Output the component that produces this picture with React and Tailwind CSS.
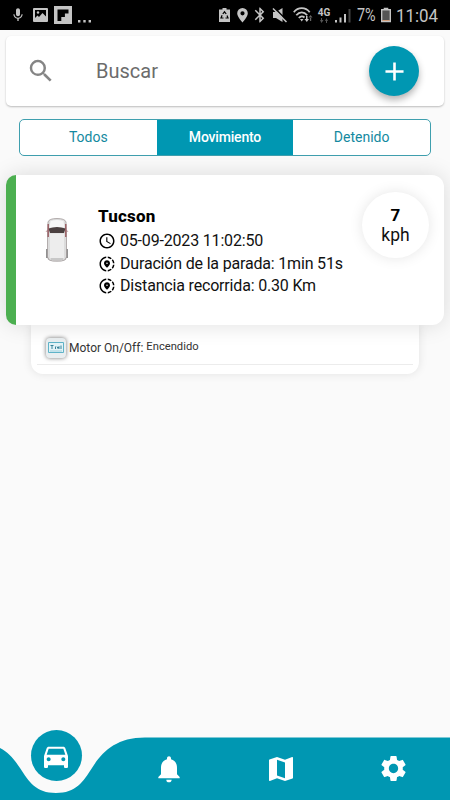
import {
  MdAccessTime,
  MdAdd,
  MdBluetooth,
  MdDirectionsCar,
  MdLocationOn,
  MdMap,
  MdMic,
  MdNotifications,
  MdSearch,
  MdSettings,
  MdShareLocation,
} from 'react-icons/md';

function StatusBar() {
  return (
    <div className="flex h-[30px] items-center justify-between bg-black text-[#c4c4c4]">
      <div className="flex h-full items-center pl-[10px]">
        <MdMic className="h-4 w-4" />
        <svg className="ml-[7px] h-[14px] w-[15px]" viewBox="0 0 15 14">
          <rect width="15" height="14" rx="1" fill="currentColor" />
          <path fill="#000" d="M2 2h11v6.500L9.500 5 6 9 4.500 7.500 2 10z" />
          <circle cx="5" cy="4.500" r="1.200" fill="currentColor" />
        </svg>
        <svg className="ml-[6px] h-[18px] w-[18px]" viewBox="0 0 18 18">
          <path fill="currentColor" d="M0 0h18v18H0z" />
          <path fill="#000" d="M3.500 3.500h11v4h-3.600v3.600H7.300v3.800H3.500z" />
        </svg>
        <svg className="ml-[6px] h-[18px] w-[14px]" viewBox="0 0 14 18">
          <path fill="currentColor" d="M0 14h2.400v2.400H0zM5.300 14h2.400v2.400H5.300zM10.600 14H13v2.400h-2.400z" />
        </svg>
      </div>

      <div className="flex h-full items-center pr-3">
        <svg className="h-4 w-[11px]" viewBox="0 0 11 16">
          <path fill="currentColor" d="M3.500 1h4v1.500H11V15H0V2.500h3.500z" />
          <path fill="none" stroke="#000" strokeWidth="1.200" d="M3.800 7l1.700-2.200L7.200 7M8 8.500l1 2.500H6.500M4.500 11H2l1.100-2.700" />
        </svg>
        <svg className="ml-[7px] h-4 w-[11px]" viewBox="0 0 11 16">
          <path fill="currentColor" fillRule="evenodd" d="M5.500 1A5.300 5.300 0 0 0 .2 6.300C.2 10 5.500 15.500 5.500 15.500S10.800 10 10.800 6.300A5.300 5.300 0 0 0 5.500 1zm0 3.200a2.100 2.100 0 1 1 0 4.200 2.100 2.100 0 0 1 0-4.200z" />
        </svg>
        <MdBluetooth className="ml-[3px] h-[18px] w-[18px]" />
        <svg className="ml-[3px] h-4 w-4" viewBox="0 0 16 16">
          <path fill="currentColor" d="M1 5h3l6.500-4v14L4 11H1z" />
          <path stroke="#000" strokeWidth="1.600" d="M2 .5l13 13" />
          <path stroke="currentColor" strokeWidth="1.500" d="M1 1.500l13.500 13.500" />
        </svg>
        <svg className="ml-[5px] h-4 w-5" viewBox="0 0 20 16">
          <g fill="none" stroke="currentColor" strokeWidth="1.800">
            <path d="M.8 5.200C5-.3 12.500-.3 16.700 5.200" />
            <path d="M3.300 8.200C6.500 4.300 11 4.300 14.200 8.200" />
            <path d="M5.800 11C7.800 8.800 9.700 8.800 11.500 10.500" />
          </g>
          <path fill="currentColor" d="M7 12h3.500L8.700 14.500zM11.500 12h4.500l-2.200 3zM13 9h1.500v4H13z" />
          <path fill="#666" d="M15.500 10.500h4L17.500 8zM16.900 10h1.300v4h-1.300z" />
        </svg>
        <div className="ml-[5px] flex h-[15px] w-3 flex-col items-center">
          <span className="text-[10px] leading-[10px] font-bold">4G</span>
          <svg className="h-[5px] w-2" viewBox="0 0 8 5">
            <path fill="#555" d="M1 0h1v2h1.500L1.500 5 0 2h1zM6 5h1V3h1L6.500 0 5 3h1z" />
          </svg>
        </div>
        <svg className="ml-[5px] h-[15px] w-4" viewBox="0 0 16 15">
          <path fill="currentColor" d="M0 12h2v2.500H0zM4.500 9.500h2v5h-2zM9 6h2v8.500H9z" />
          <path fill="#444" d="M13.500 1h2v13.500h-2z" />
        </svg>
        <div className="ml-[6px] w-[20px] text-lg leading-none">
          <span className="inline-block origin-left scale-x-[0.8]">7%</span>
        </div>
        <svg className="ml-[4px] h-4 w-[10px]" viewBox="0 0 11 16">
          <path fill="currentColor" d="M3 0h5v1.500h3V16H0V1.500h3z" />
          <path fill="#555" d="M1.500 3h8v11h-8z" />
          <path fill="#d9a07a" d="M1.500 13.500h8v1h-8z" />
        </svg>
        <div className="ml-[5px] w-[42px] text-[19px] leading-none">
          <span className="inline-block origin-left scale-x-[0.89]">11:04</span>
        </div>
      </div>
    </div>
  );
}

function SearchBar() {
  return (
    <div className="mx-[6px] mt-[6px] flex h-[70px] items-center rounded-[5px] bg-white pr-[25px] pl-5 shadow-[0_1px_2px_rgba(0,0,0,0.25)]">
      <MdSearch className="h-[30px] w-[30px] text-[#858585]" />
      <span className="ml-10 flex-1 text-[20px] text-[#6c6c6c]">Buscar</span>
      <button className="flex h-[50px] w-[50px] items-center justify-center rounded-full bg-[#0097b2] text-white shadow-[0_4px_7px_rgba(0,0,0,0.3)]">
        <MdAdd className="h-[31px] w-[31px]" />
      </button>
    </div>
  );
}

function Tabs() {
  return (
    <div className="mx-[19px] mt-[13px] grid h-[37px] grid-cols-3 overflow-hidden rounded-[5px] border border-[#3f9fae] bg-white text-[14px] text-[#1489a0]">
      <button>Todos</button>
      <button className="bg-[#0097b2] font-medium tracking-[-0.180px] text-white">Movimiento</button>
      <button>Detenido</button>
    </div>
  );
}

function CarTop() {
  return (
    <svg className="h-[46px] w-6" viewBox="0 0 24 46">
      <ellipse cx="12" cy="41.500" rx="9.500" ry="3" fill="#bbb" />
      <path fill="#777" d="M1.200 32h2v9h-2zM20.800 32h2v9h-2z" />
      <path fill="#a5656b" d="M.5 14.500l3-2v2zM23.500 14.500l-3-2v2z" />
      <path fill="#dcdcdc" stroke="#a39c9c" strokeWidth=".8" d="M3 5Q4 1.500 12 1.500T21 5l.5 12v23q-1 4-5 4h-9q-4 0-5-4V17z" />
      <path fill="#f6f6f6" d="M5.500 4q6.500-2 13 0l1 6.500h-15z" />
      <path fill="#4b4040" d="M3.500 11.500q8.500-3 17 0l-1.500 4.500H5z" />
      <path fill="none" stroke="#924b52" strokeWidth="1.200" d="M3.200 7v13M20.800 7v13" />
      <path fill="#ededed" d="M5 16.500h14V41H5z" />
      <path fill="none" stroke="#aaa" strokeWidth=".8" d="M6 42h12" />
    </svg>
  );
}

const details = [
  { icon: MdAccessTime, text: '05-09-2023 11:02:50' },
  { icon: MdShareLocation, text: 'Duración de la parada: 1min 51s' },
  { icon: MdShareLocation, text: 'Distancia recorrida: 0.30 Km' },
];

function VehicleCard() {
  return (
    <div className="relative z-10 mx-[6px] mt-[19px] flex h-[150px] rounded-xl bg-white shadow-[0_0_22px_rgba(0,0,0,0.13)]">
      <div className="w-[10px] rounded-l-xl bg-[#4caf50]" />
      <div className="ml-[29px] pt-[42px]">
        <CarTop />
      </div>
      <div className="ml-[29px] flex-1 pt-[30px] text-black">
        <h2 className="mb-[2px] text-[17px] leading-[23px] font-extrabold tracking-[0.200px]">Tucson</h2>
        <ul>
          {details.map(({ icon: Icon, text }) => (
            <li key={text} className="flex h-[22.500px] items-center text-[16px] tracking-[-0.180px] whitespace-nowrap text-[#111]">
              <Icon className="mr-1 h-[18px] w-[18px] text-black" />
              {text}
            </li>
          ))}
        </ul>
      </div>
      <div className="mt-[17px] mr-[15px] flex h-[66px] w-[67px] shrink-0 flex-col items-center justify-center rounded-full bg-white text-[17px] leading-5 shadow-[0_0_14px_rgba(0,0,0,0.1)]">
        <span className="font-bold">7</span>
        <span className="text-[17.500px] text-[#111]">kph</span>
      </div>
    </div>
  );
}

function SensorPanel() {
  return (
    <div className="mx-[31px] h-[49px] rounded-b-xl bg-white px-[6px] shadow-[0_0_10px_rgba(0,0,0,0.1)]">
      <div className="flex h-10 items-center border-b border-[#ececec] pt-[6px] pl-[9px] text-[12px] text-[#333]">
        <div className="flex h-5 w-5 items-center justify-center rounded-[4px] bg-[#e9eef0] shadow-[0_0_4px_rgba(0,0,0,0.55)]">
          <svg className="h-[11px] w-4" viewBox="0 0 16 11">
            <path fill="#e3f3f7" stroke="#5fb3c8" d="M.5.500h15v10H.5z" />
            <path fill="none" stroke="#38839a" d="M2.500 3.500h3M4 3.500V7M7.500 7V4.500M9 4.500l1 2 1-2V7M13 3.500v3.500" />
            <path stroke="#9fd0dd" d="M2 9h12" />
          </svg>
        </div>
        <span className="ml-[3px]">Motor On/Off:</span>
        <span className="ml-[3px] -mt-px text-[11.200px]">Encendido</span>
      </div>
    </div>
  );
}

function BottomNav() {
  return (
    <nav className="relative mt-auto grid h-[63px] grid-cols-4 items-center justify-items-center text-white">
      <svg className="absolute inset-0 h-[63px] w-full" viewBox="0 0 450 63" preserveAspectRatio="none">
        <path fill="#0097b2" d="M0 11C9 16 14 22 20 31C29 45 36 56 56 56S83 45 92 31C102 15 116 .5 145 .5H450V63H0z" />
      </svg>
      <button className="relative -mt-[26px] flex h-[51px] w-[51px] items-center justify-center rounded-full bg-[#0097b2]">
        <MdDirectionsCar className="h-8 w-8" />
      </button>
      <MdNotifications className="relative h-8 w-8" />
      <MdMap className="relative h-8 w-8" />
      <MdSettings className="relative h-[31px] w-[31px]" />
    </nav>
  );
}

export default function App() {
  return (
    <div className="flex h-[800px] w-[450px] flex-col overflow-hidden bg-[#fafafa] font-['Roboto',sans-serif]">
      <StatusBar />
      <SearchBar />
      <Tabs />
      <VehicleCard />
      <SensorPanel />
      <BottomNav />
    </div>
  );
}
